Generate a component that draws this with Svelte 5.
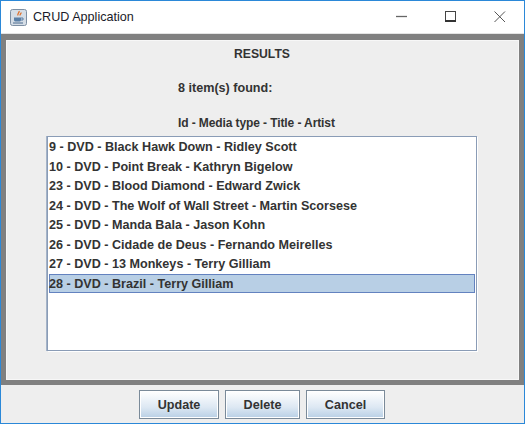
<script>
  const items = [
    '9 - DVD - Black Hawk Down - Ridley Scott',
    '10 - DVD - Point Break - Kathryn Bigelow',
    '23 - DVD - Blood Diamond - Edward Zwick',
    '24 - DVD - The Wolf of Wall Street - Martin Scorsese',
    '25 - DVD - Manda Bala - Jason Kohn',
    '26 - DVD - Cidade de Deus - Fernando Meirelles',
    '27 - DVD - 13 Monkeys - Terry Gilliam',
    '28 - DVD - Brazil - Terry Gilliam'
  ];
  let selected = $state(7);
</script>

<div class="window">
  <header class="titlebar">
    <svg class="app-icon" width="17" height="17" viewBox="0 0 17 17">
      <rect x="0.5" y="0.5" width="16" height="16" rx="2" fill="#d5dde6" stroke="#7d8fa3" />
      <path d="M9 2c1 1.500-2 2.500-1 4.500M11 3.500c.5 1-1.500 2-.8 3" fill="none" stroke="#e0702a" stroke-width="1.300" />
      <path d="M4 8.500h7v2.500c0 1-1 1.500-2 1.500H6c-1 0-2-.5-2-1.500z" fill="#5a7fa6" />
      <path d="M3 14h10" stroke="#4a6a8e" stroke-width="1" />
      <path d="M11 9h2v2h-2" fill="none" stroke="#5a7fa6" />
    </svg>
    <span class="title">CRUD Application</span>
    <div class="controls">
      <svg width="12" height="12" viewBox="0 0 12 12"><path d="M0 5.500h11" stroke="#666" stroke-width="1.300" /></svg>
      <svg width="12" height="12" viewBox="0 0 12 12"><rect x="0.500" y="0.500" width="10" height="10" fill="none" stroke="#444" /><path d="M0 10h11" stroke="#333" stroke-width="2" /></svg>
      <svg width="12" height="12" viewBox="0 0 12 12"><path d="M0.500 0.500l10.500 10.500M11 0.500L0.500 11" stroke="#555" stroke-width="1" /></svg>
    </div>
  </header>

  <main class="frame">
    <section class="panel">
      <h1>RESULTS</h1>
      <p class="count">8 item(s) found:</p>
      <p class="columns">Id - Media type - Title - Artist</p>
      <ul class="list">
        {#each items as item, i}
          <li class:selected={i === selected} onclick={() => (selected = i)}>{item}</li>
        {/each}
      </ul>
    </section>
  </main>

  <footer class="actions">
    <button>Update</button>
    <button>Delete</button>
    <button>Cancel</button>
  </footer>
</div>

<style>
  :global(body) {
    margin: 0;
    background: #eeeeee;
  }

  .window {
    box-sizing: border-box;
    width: 525px;
    height: 424px;
    display: flex;
    flex-direction: column;
    border: 1px solid #2b88d8;
    font-family: "Liberation Sans", Arial, sans-serif;
    color: #333333;
    background: #eeeeee;
  }

  .titlebar {
    height: 32px;
    flex: none;
    display: flex;
    align-items: center;
    background: #ffffff;
    border-bottom: 1px solid #e4e4e4;
    padding-left: 9px;
  }
  .app-icon { margin-right: 6px; }
  .title {
    font-size: 12.6px;
    color: #1a1a2a;
  }
  .controls {
    margin-left: auto;
    display: flex;
    gap: 37px;
    padding-right: 18px;
  }

  .frame {
    height: 351px;
    flex: none;
    box-sizing: border-box;
    border: 5px solid #808080;
    border-top-width: 6px;
    background: #eeeeee;
  }
  .panel {
    height: 100%;
    box-sizing: border-box;
    border: 1px solid #f7f7f7;
    padding: 6px 41px 0 40px;
  }

  h1, p {
    margin: 0;
    font-size: 12.6px;
    font-weight: 700;
    line-height: 14px;
  }
  h1 { text-align: center; font-size: 12.2px; }
  .count { margin: 20px 0 0 131px; }
  .columns { margin: 21px 0 0 131px; font-size: 12px; letter-spacing: -0.1px; }

  .list {
    list-style: none;
    margin: 6px 0 0;
    padding: 0 1px 1px;
    height: 215px;
    box-sizing: border-box;
    background: #ffffff;
    border: 1px solid #8a9cb6;
    box-shadow: 1px 1px 0 #ffffff, -1px 0 0 #a4b3c8;
  }
  li {
    box-sizing: border-box;
    height: 19.500px;
    line-height: 18px;
    text-indent: -1px;
    font-size: 12.6px;
    font-weight: 700;
    border: 1px solid transparent;
  }
  li.selected {
    background: #b8cfe5;
    border-color: #6382bf;
  }

  .actions {
    flex: 1;
    display: flex;
    justify-content: center;
    align-items: center;
    gap: 6px;
    padding: 1px 1px 0 0;
  }
  button {
    height: 29px;
    padding: 0;
    width: 80px;
    font: 700 12.6px "Liberation Sans", Arial, sans-serif;
    color: #333333;
    border: 1px solid #7a8a99;
    box-shadow: inset 0 0 0 1px #ffffff;
    background: linear-gradient(#ffffff, #dde8f3 60%, #b8cfe5);
  }
  button:nth-child(2) { width: 75px; }
  button:nth-child(3) { width: 79px; }
</style>
